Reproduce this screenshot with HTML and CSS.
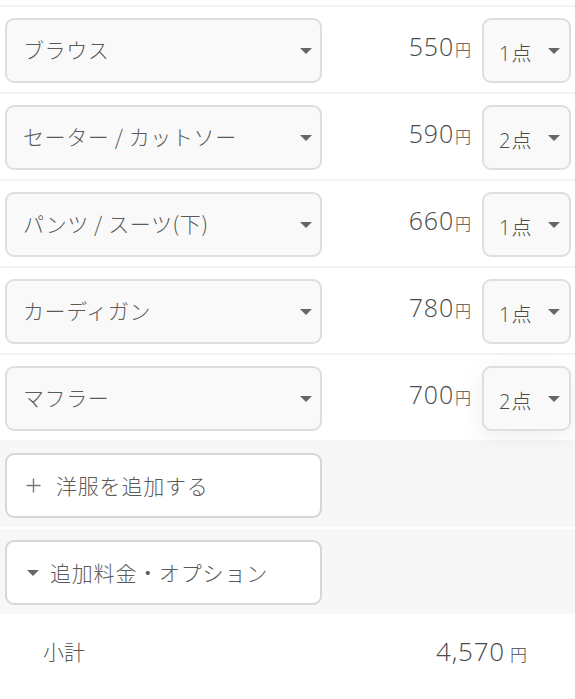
FILE: index.html
```html
<!DOCTYPE html>
<html lang="ja">
<head>
<meta charset="utf-8">
<link rel="stylesheet" href="styles.css">
</head>
<body>
<div class="page">
  <div class="items">
    <div class="row">
      <div class="select"><span class="label">ブラウス</span><span class="caret"></span></div>
      <div class="price"><span class="num">550</span><span class="yen">円</span></div>
      <div class="qty"><span class="qlabel"><span class="qn">1</span>点</span><span class="caret"></span></div>
    </div>
    <div class="row">
      <div class="select"><span class="label">セーター / カットソー</span><span class="caret"></span></div>
      <div class="price"><span class="num">590</span><span class="yen">円</span></div>
      <div class="qty"><span class="qlabel"><span class="qn">2</span>点</span><span class="caret"></span></div>
    </div>
    <div class="row">
      <div class="select"><span class="label">パンツ / スーツ(下)</span><span class="caret"></span></div>
      <div class="price"><span class="num">660</span><span class="yen">円</span></div>
      <div class="qty"><span class="qlabel"><span class="qn">1</span>点</span><span class="caret"></span></div>
    </div>
    <div class="row">
      <div class="select"><span class="label">カーディガン</span><span class="caret"></span></div>
      <div class="price"><span class="num">780</span><span class="yen">円</span></div>
      <div class="qty"><span class="qlabel"><span class="qn">1</span>点</span><span class="caret"></span></div>
    </div>
    <div class="row">
      <div class="select"><span class="label">マフラー</span><span class="caret"></span></div>
      <div class="price"><span class="num">700</span><span class="yen">円</span></div>
      <div class="qty qty-focus"><span class="qlabel"><span class="qn">2</span>点</span><span class="caret"></span></div>
    </div>
  </div>
  <div class="actions">
    <div class="action-row">
      <div class="btn">
        <svg class="plus" width="15" height="15" viewBox="0 0 15 15"><path d="M7.5 0.5V14.5M0.5 7.5H14.5" stroke="#777" stroke-width="1.4" fill="none"/></svg>
        <span class="btn-label">洋服を追加する</span>
      </div>
    </div>
    <div class="action-row sep">
      <div class="btn">
        <span class="caret caret-left"></span>
        <span class="btn-label">追加料金・オプション</span>
      </div>
    </div>
  </div>
  <div class="subtotal">
    <span class="sub-label">小計</span>
    <span class="sub-price"><span class="num">4,570</span><span class="yen">円</span></span>
  </div>
</div>
</body>
</html>
```

FILE: styles.css
```css
* { box-sizing: border-box; }
html, body { margin: 0; padding: 0; background: #fff; }
body {
  font-family: "Noto Sans CJK JP", sans-serif;
  color: #5c5c5c;
  width: 575px;
  overflow: hidden;
}
.page { padding-top: 5px; }

.row {
  display: flex;
  align-items: center;
  border-top: 2px solid #f3f3f3;
  padding: 11px 4px 9px 5px;
}
.select {
  width: 317px;
  height: 65px;
  flex: none;
  display: flex;
  align-items: center;
  justify-content: space-between;
  background: #f9f9f9;
  border: 2px solid #dedede;
  border-radius: 9px;
  padding: 0 8px 0 16px;
}
.label {
  font-family: "Noto Sans CJK JP", sans-serif;
  font-weight: 300;
  font-size: 21px;
  letter-spacing: 0.6px;
  color: #5a5a5a;
  margin-top: -4px;
}
.caret {
  width: 0;
  height: 0;
  border-left: 6px solid transparent;
  border-right: 6px solid transparent;
  border-top: 6px solid #666;
  flex: none;
}
.price {
  flex: 1;
  display: flex;
  justify-content: flex-end;
  align-items: baseline;
  padding-right: 11px;
  margin-top: -10px;
}
.num {
  font-family: "Open Sans", sans-serif;
  font-weight: 300;
  font-size: 25px;
  letter-spacing: 0.8px;
  color: #4a4a4a;
}
.yen {
  font-family: "Noto Sans CJK JP", sans-serif;
  font-weight: 300;
  font-size: 16px;
  margin-left: 1px;
  color: #4a4a4a;
}
.qty {
  width: 89px;
  height: 65px;
  flex: none;
  display: flex;
  align-items: center;
  justify-content: space-between;
  background: #f9f9f9;
  border: 2px solid #dedede;
  border-radius: 9px;
  padding: 4px 9px 0 15px;
}
.qty-focus { box-shadow: 0 6px 26px rgba(0, 0, 0, 0.07); }
.qlabel {
  font-family: "Noto Sans CJK JP", sans-serif;
  font-weight: 300;
  font-size: 20px;
  color: #4a4a4a;
}
.qn {
  font-family: "Open Sans", sans-serif;
  font-weight: 300;
  margin-right: 1px;
}
.qty .caret { margin-top: -4px; }

.actions { background: #f7f7f7; }
.action-row {
  border-top: 2px solid #f7f7f7;
  padding: 11px 4px 9px 5px;
}
.action-row.sep { border-top-color: #fff; }
.btn {
  width: 317px;
  height: 65px;
  display: flex;
  align-items: center;
  background: #fff;
  border: 2px solid #d6d6d6;
  border-radius: 9px;
  padding: 0 0 0 18px;
}
.plus { margin-left: 1px; margin-right: 15px; }
.caret-left { margin-left: 2px; margin-right: 11px; }
.btn-label {
  font-family: "Noto Sans CJK JP", sans-serif;
  font-weight: 300;
  font-size: 21px;
  letter-spacing: 0.8px;
  color: #5a5a5a;
  margin-top: -2px;
}

.subtotal {
  display: flex;
  align-items: center;
  justify-content: space-between;
  height: 74px;
  padding: 0 48px 0 43px;
}
.sub-label {
  font-family: "Noto Sans CJK JP", sans-serif;
  font-weight: 300;
  font-size: 21px;
  color: #5a5a5a;
}
.sub-price { display: flex; align-items: baseline; }
.sub-price .num { font-size: 26px; }
.sub-price .yen { font-size: 17px; margin-left: 5px; }
```
